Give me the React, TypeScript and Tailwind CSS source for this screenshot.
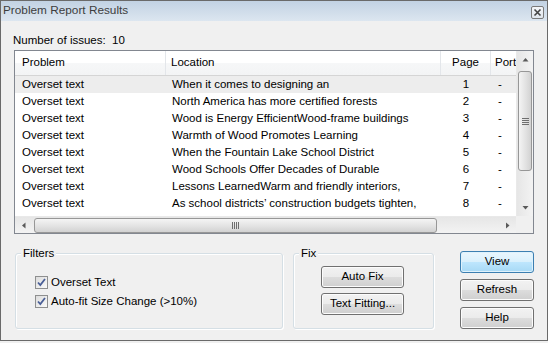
import React from "react";

const rows = [
  "When it comes to designing an",
  "North America has more certified forests",
  "Wood is Energy EfficientWood-frame buildings",
  "Warmth of Wood Promotes Learning",
  "When the Fountain Lake School District",
  "Wood Schools Offer Decades of Durable",
  "Lessons LearnedWarm and friendly interiors,",
  "As school districts’ construction budgets tighten,",
];

const font = { fontFamily: '"Liberation Sans", Arial, sans-serif' };

function Arrow({ dir }: { dir: "up" | "down" | "left" | "right" }) {
  const pts = {
    up: "0.5,4.5 3.5,1 6.5,4.5",
    down: "0.5,1 3.5,4.5 6.5,1",
    left: "4.5,0.5 1,3.5 4.5,6.5",
    right: "1,0.5 4.5,3.5 1,6.5",
  }[dir];
  const vert = dir === "up" || dir === "down";
  return (
    <svg width={vert ? 7 : 6} height={vert ? 6 : 7} viewBox={vert ? "0 0 7 6" : "0 0 6 7"}>
      <polygon points={pts} fill="#5a5a5a" />
    </svg>
  );
}

function Checkbox() {
  return (
    <div className="w-[13px] h-[13px] border border-[#8e8f8f] bg-[linear-gradient(135deg,#dcdcdc,#fafafa)] flex items-center justify-center">
      <svg width="11" height="11" viewBox="0 0 11 11">
        <path d="M2 5.5 L4.3 8 L9 2" fill="none" stroke="#4a5f97" strokeWidth="1.8" />
      </svg>
    </div>
  );
}

function WinButton({ label, focused }: { label: string; focused?: boolean }) {
  return (
    <div
      className={`h-[22px] w-full rounded-[3px] border flex items-center justify-center text-[11.5px] text-black ${
        focused
          ? "border-[#3c7fb1] bg-[linear-gradient(#eaf6fd_0%,#d9f0fc_50%,#bee6fd_50%,#a7d9f5_100%)] shadow-[inset_0_0_0_1px_#dff2fc]"
          : "border-[#707070] bg-[linear-gradient(#f2f2f2_0%,#ebebeb_50%,#dddddd_50%,#cfcfcf_100%)] shadow-[inset_0_0_0_1px_#fcfcfc]"
      }`}
    >
      {label}
    </div>
  );
}

export default function App() {
  return (
    <div className="w-[548px] h-[343px] bg-[#f0f0f0]" style={font}>
      <div className="w-[548px] h-[341px] border border-[#6a6a6a] flex flex-col overflow-hidden">
        {/* Title bar */}
        <div className="h-[20px] shrink-0 flex items-center justify-between pl-[2px] pr-[3px] bg-[linear-gradient(#c2d2e3,#dce6f0)]">
          <span className="text-[11.8px] text-[#3d3d3d]">Problem Report Results</span>
          <div className="w-[13px] h-[13px] mt-[2px] rounded-[2px] border border-[#7a7a7a] bg-[linear-gradient(#f4f6f9,#dfe5ec)] flex items-center justify-center">
            <svg width="9" height="9" viewBox="0 0 9 9">
              <path d="M1.5 1.5 L7.5 7.5 M7.5 1.5 L1.5 7.5" stroke="#444" strokeWidth="1.6" />
            </svg>
          </div>
        </div>

        {/* Content */}
        <div className="flex-1 bg-[#f0f0f0] px-[13px]">
          <div className="mt-[11px] h-[16px] leading-[16px] text-[11.5px] text-black -ml-px">
            Number of issues:&nbsp; 10
          </div>

          {/* List view */}
          <div className="mt-[2px] h-[184px] border border-[#828790] bg-white flex flex-col">
            <div className="flex flex-1 min-h-0">
              <div className="flex-1 min-w-0 overflow-hidden">
                <div className="h-[25px] flex text-[11.5px] text-black border-b border-[#d5d5d5] bg-[linear-gradient(#ffffff_0%,#ffffff_50%,#f6f7f8_50%,#f3f4f5_100%)]">
                  <div className="w-[151px] shrink-0 pl-[7px] flex items-center border-r border-[#e3e6ea]">Problem</div>
                  <div className="w-[275px] shrink-0 pl-[5px] flex items-center border-r border-[#e3e6ea]">Location</div>
                  <div className="w-[50px] shrink-0 flex items-center justify-center border-r border-[#e3e6ea]">Page</div>
                  <div className="flex-1 pl-[4px] flex items-center whitespace-nowrap">Port</div>
                </div>
                {rows.map((loc, i) => (
                  <div
                    key={i}
                    className={`h-[17px] flex items-center text-[11.5px] text-black whitespace-nowrap ${
                      i === 0 ? "bg-[#ededed]" : ""
                    }`}
                  >
                    <div className="w-[151px] shrink-0 pl-[7px]">Overset text</div>
                    <div className="w-[275px] shrink-0 pl-[6px] overflow-hidden">{loc}</div>
                    <div className="w-[50px] shrink-0 text-center">{i + 1}</div>
                    <div className="flex-1 pl-[7px]">-</div>
                  </div>
                ))}
              </div>
              {/* Vertical scrollbar */}
              <div className="w-[17px] shrink-0 flex flex-col bg-[linear-gradient(90deg,#e6e6e6,#f3f3f3)] border-l border-[#e9e9e9]">
                <div className="h-[17px] flex items-center justify-center">
                  <Arrow dir="up" />
                </div>
                <div className="mt-[3px] mx-[1px] h-[100px] rounded-[3px] border border-[#979797] bg-[linear-gradient(90deg,#f4f4f4,#e4e4e4_50%,#d2d2d2)] flex flex-col items-center justify-center gap-[1px]">
                  <div className="w-[7px] h-px bg-[#6e6e6e]" />
                  <div className="w-[7px] h-px bg-[#6e6e6e]" />
                  <div className="w-[7px] h-px bg-[#6e6e6e]" />
                  <div className="w-[7px] h-px bg-[#6e6e6e]" />
                </div>
                <div className="flex-1" />
                <div className="h-[17px] flex items-center justify-center">
                  <Arrow dir="down" />
                </div>
              </div>
            </div>
            {/* Horizontal scrollbar */}
            <div className="h-[17px] shrink-0 flex">
              <div className="flex-1 flex items-center bg-[linear-gradient(#e6e6e6,#f3f3f3)] border-t border-[#e9e9e9]">
                <div className="w-[17px] h-full flex items-center justify-center">
                  <Arrow dir="left" />
                </div>
                <div className="ml-[2px] w-[403px] h-[15px] rounded-[3px] border border-[#979797] bg-[linear-gradient(#f4f4f4,#e4e4e4_50%,#d2d2d2)] flex items-center justify-center gap-[1px]">
                  <div className="w-px h-[7px] bg-[#6e6e6e]" />
                  <div className="w-px h-[7px] bg-[#6e6e6e]" />
                  <div className="w-px h-[7px] bg-[#6e6e6e]" />
                  <div className="w-px h-[7px] bg-[#6e6e6e]" />
                </div>
                <div className="flex-1" />
                <div className="w-[17px] h-full flex items-center justify-center">
                  <Arrow dir="right" />
                </div>
              </div>
              <div className="w-[17px] bg-[#f0f0f0]" />
            </div>
          </div>

          {/* Bottom section */}
          <div className="flex items-start">
            <div className="relative mt-[19px] ml-[1px] w-[268px] h-[76px] rounded-[3px] border border-[#d5dfe5] shadow-[inset_1px_1px_0_#ffffff,1px_1px_0_#ffffff]">
              <span className="absolute -top-[9px] left-[5px] px-[2px] bg-[#f0f0f0] text-[11.5px] leading-[16px] text-black">
                Filters
              </span>
              <div className="mt-[22px] ml-[19px] flex flex-col gap-[6px] text-[11.5px] text-black">
                <div className="flex items-center gap-[3px] h-[13px]">
                  <Checkbox />
                  <span>Overset Text</span>
                </div>
                <div className="flex items-center gap-[3px] h-[13px]">
                  <Checkbox />
                  <span>Auto-fit Size Change (&gt;10%)</span>
                </div>
              </div>
            </div>

            <div className="relative mt-[19px] ml-[10px] w-[141px] h-[76px] rounded-[3px] border border-[#d5dfe5] shadow-[inset_1px_1px_0_#ffffff,1px_1px_0_#ffffff]">
              <span className="absolute -top-[9px] left-[5px] px-[2px] bg-[#f0f0f0] text-[11.5px] leading-[16px] text-black">
                Fix
              </span>
              <div className="mt-[12px] ml-[27px] w-[83px] flex flex-col gap-[6px]">
                <div className="h-[21px]">
                  <WinButton label="Auto Fix" />
                </div>
                <div className="h-[21px]">
                  <WinButton label="Text Fitting..." />
                </div>
              </div>
            </div>

            <div className="mt-[17px] ml-[26px] w-[74px] flex flex-col gap-[6px]">
              <WinButton label="View" focused />
              <WinButton label="Refresh" />
              <WinButton label="Help" />
            </div>
          </div>
        </div>
      </div>
    </div>
  );
}
